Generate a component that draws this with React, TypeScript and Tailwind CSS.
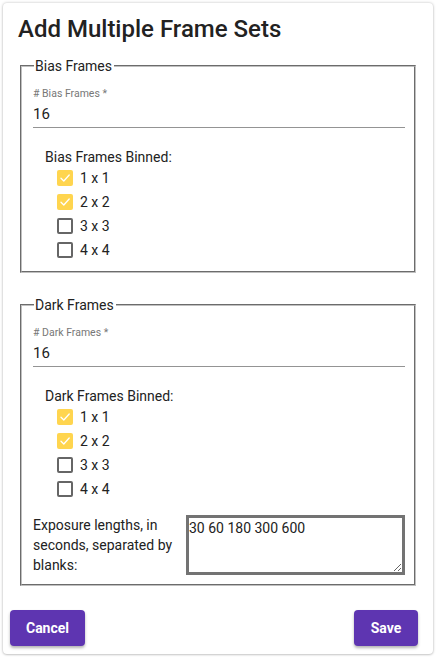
import React from "react";

const font = { fontFamily: "Roboto, 'Noto Sans', sans-serif" };

function Check({ checked, label }: { checked: boolean; label: string }) {
  return (
    <div className="flex h-[24px] items-center">
      {checked ? (
        <span className="flex h-[16px] w-[16px] items-center justify-center rounded-[2px] bg-[#ffd54f]">
          <svg width="12" height="12" viewBox="0 0 12 12" fill="none">
            <path d="M2 6.3 L4.8 9 L10.2 3" stroke="white" strokeWidth="1.3" strokeLinecap="round" strokeLinejoin="round" />
          </svg>
        </span>
      ) : (
        <span className="h-[16px] w-[16px] rounded-[2px] border-2 border-[#666]" />
      )}
      <span className="ml-[7px] text-[14px] leading-5 text-[#222]">{label}</span>
    </div>
  );
}

function FrameSet({ title, children }: { title: string; children?: React.ReactNode }) {
  return (
    <fieldset className="border-2 border-[#c0c0c0] [border-style:groove] pl-[11px] pr-[9px] pb-[9px]">
      <legend className="ml-[1px] pl-[1px] pr-[2px] text-[14px] leading-5 text-[#222]">{title}</legend>
      <div className="pt-[12px]">
        <div className="text-[10.5px] leading-[12px] text-[#777]"># {title} *</div>
        <div className="mt-[4px] border-b border-[#949494] pb-[3px] text-[15px] leading-5 text-[#222]">16</div>
        <div className="mt-[20px] pl-[12px] text-[14px] leading-[18px] text-[#222]">{title} Binned:</div>
        <div className="pl-[24px]">
          <Check checked label="1 x 1" />
          <Check checked label="2 x 2" />
          <Check checked={false} label="3 x 3" />
          <Check checked={false} label="4 x 4" />
        </div>
        {children}
      </div>
    </fieldset>
  );
}

export default function App() {
  return (
    <div className="h-[657px] w-[436px] bg-white p-[3px]" style={font}>
      <div className="flex h-[651px] flex-col rounded-[4px] bg-white shadow-[0_0_3px_rgba(0,0,0,0.25),0_1px_2px_rgba(0,0,0,0.12)]">
        <div className="px-[17px] pt-[10px]">
          <h1 className="-ml-[2px] text-[24px] font-medium leading-8 text-[#222]">Add Multiple Frame Sets</h1>
          <div className="mt-[11px]">
            <FrameSet title="Bias Frames" />
          </div>
          <div className="mt-[22px]">
            <FrameSet title="Dark Frames">
              <div className="mt-[14px] flex">
                <div className="w-[153px] text-[14px] leading-5 text-[#222]">
                  Exposure lengths, in seconds, separated by blanks:
                </div>
                <textarea
                  className="h-[60px] flex-1 border-[3px] border-[#737373] bg-white p-0 text-[14px] text-[#222] outline-none"
                  style={font}
                  defaultValue="30 60 180 300 600"
                />
              </div>
            </FrameSet>
          </div>
        </div>
        <div className="mt-[24px] flex justify-between pl-[7px] pr-[15px]">
          <button className="h-[36px] w-[75px] rounded-[4px] bg-[#5e35b1] text-[14px] font-bold text-white shadow-[0_2px_3px_rgba(0,0,0,0.3)]">
            Cancel
          </button>
          <button className="h-[36px] w-[64px] rounded-[4px] bg-[#5e35b1] text-[14px] font-bold text-white shadow-[0_2px_3px_rgba(0,0,0,0.3)]">
            Save
          </button>
        </div>
      </div>
    </div>
  );
}
